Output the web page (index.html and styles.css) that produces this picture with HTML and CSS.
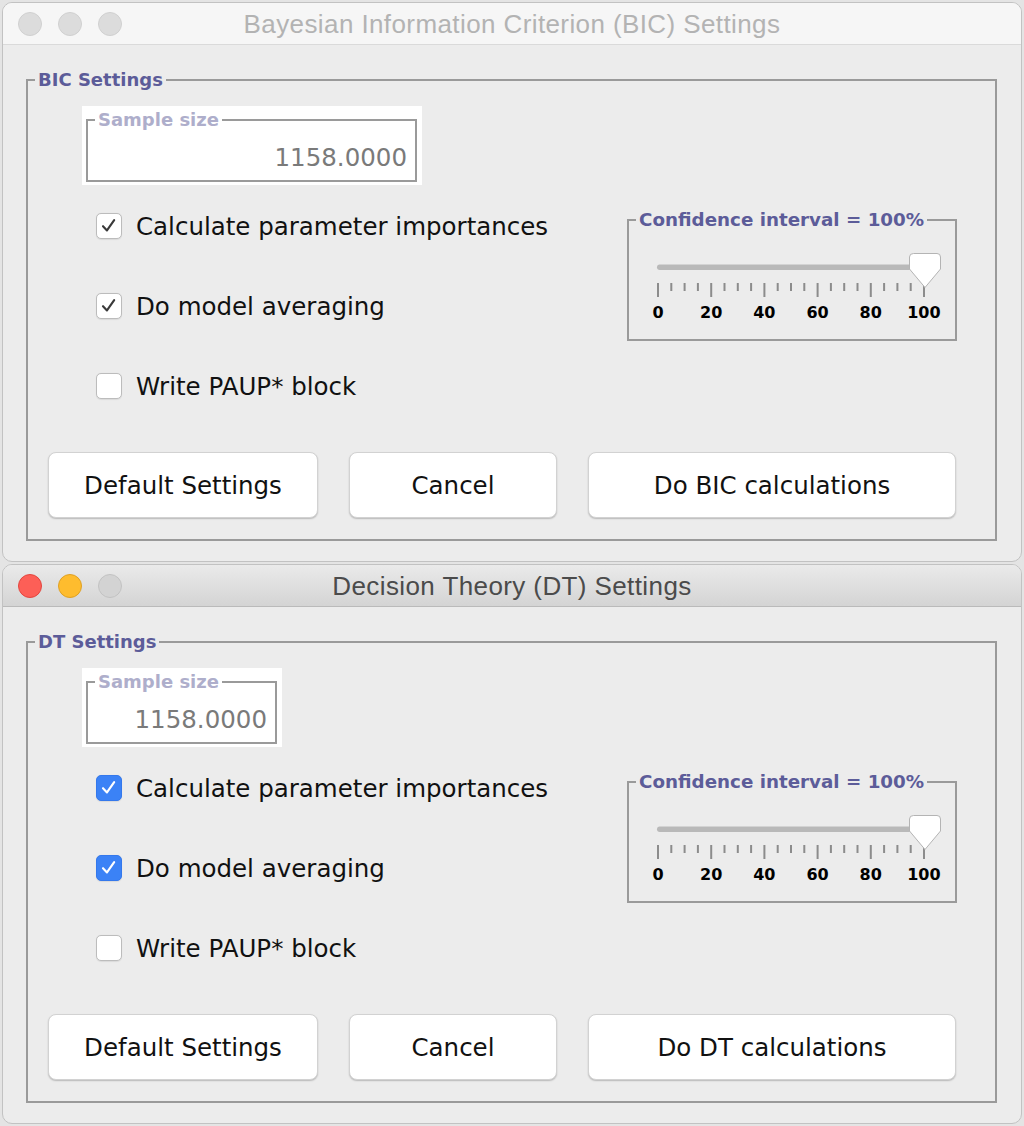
FILE: index.html
```html
<!DOCTYPE html>
<html>
<head>
  <meta charset="UTF-8">
  <title>BIC / DT Settings</title>
  <link rel="stylesheet" href="styles.css">
</head>
<body>
  <div class="screen">

    <div class="window inactive">
      <div class="titlebar">
        <div class="lights">
          <span class="light close"></span>
          <span class="light minimize"></span>
          <span class="light zoom"></span>
        </div>
        <div class="title">Bayesian Information Criterion (BIC) Settings</div>
        <div></div>
      </div>
      <div class="window-body">
        <fieldset class="group">
          <legend>BIC Settings</legend>
          <div class="group-main">
            <div class="left-col">
              <div class="sample-box wide">
                <fieldset class="sample-field">
                  <legend>Sample size</legend>
                  <div class="sample-value">1158.0000</div>
                </fieldset>
              </div>
              <div class="check-row">
                <span class="check on"><svg viewBox="0 0 26 26"><path d="M6.5 13.2 L10.8 17.8 L18.6 6.6"/></svg></span>
                <span class="check-label">Calculate parameter importances</span>
              </div>
              <div class="check-row">
                <span class="check on"><svg viewBox="0 0 26 26"><path d="M6.5 13.2 L10.8 17.8 L18.6 6.6"/></svg></span>
                <span class="check-label">Do model averaging</span>
              </div>
              <div class="check-row">
                <span class="check"></span>
                <span class="check-label">Write PAUP* block</span>
              </div>
            </div>
            <fieldset class="conf">
              <legend>Confidence interval = 100%</legend>
              <svg class="slider" width="326" height="50" viewBox="0 0 326 50">
                <rect class="track" x="28" y="13.5" width="270" height="5.5" rx="2.75"/>
                <g class="ticks">
                  <line x1="29" y1="32" x2="29" y2="46"/><line x1="82.2" y1="32" x2="82.2" y2="46"/>
                  <line x1="135.4" y1="32" x2="135.4" y2="46"/><line x1="188.6" y1="32" x2="188.6" y2="46"/>
                  <line x1="241.8" y1="32" x2="241.8" y2="46"/><line x1="295" y1="32" x2="295" y2="46"/>
                  <line x1="42.3" y1="32" x2="42.3" y2="40"/><line x1="55.6" y1="32" x2="55.6" y2="40"/>
                  <line x1="68.9" y1="32" x2="68.9" y2="40"/><line x1="95.5" y1="32" x2="95.5" y2="40"/>
                  <line x1="108.8" y1="32" x2="108.8" y2="40"/><line x1="122.1" y1="32" x2="122.1" y2="40"/>
                  <line x1="148.7" y1="32" x2="148.7" y2="40"/><line x1="162" y1="32" x2="162" y2="40"/>
                  <line x1="175.3" y1="32" x2="175.3" y2="40"/><line x1="201.9" y1="32" x2="201.9" y2="40"/>
                  <line x1="215.2" y1="32" x2="215.2" y2="40"/><line x1="228.5" y1="32" x2="228.5" y2="40"/>
                  <line x1="255.1" y1="32" x2="255.1" y2="40"/><line x1="268.4" y1="32" x2="268.4" y2="40"/>
                  <line x1="281.7" y1="32" x2="281.7" y2="40"/>
                </g>
                <path class="thumb" d="M284.5 2.5 H308 Q311.5 2.5 311.5 6 V18 L296 36.5 L280.5 18 V6 Q280.5 2.5 284.5 2.5 Z"/>
              </svg>
              <div class="scale">
                <span>0</span><span>20</span><span>40</span><span>60</span><span>80</span><span>100</span>
              </div>
            </fieldset>
          </div>
          <div class="buttons">
            <button class="btn btn-default">Default Settings</button>
            <button class="btn btn-cancel">Cancel</button>
            <button class="btn btn-run">Do BIC calculations</button>
          </div>
        </fieldset>
      </div>
    </div>

    <div class="window active">
      <div class="titlebar">
        <div class="lights">
          <span class="light close"></span>
          <span class="light minimize"></span>
          <span class="light zoom"></span>
        </div>
        <div class="title">Decision Theory (DT) Settings</div>
        <div></div>
      </div>
      <div class="window-body">
        <fieldset class="group">
          <legend>DT Settings</legend>
          <div class="group-main">
            <div class="left-col">
              <div class="sample-box narrow">
                <fieldset class="sample-field">
                  <legend>Sample size</legend>
                  <div class="sample-value">1158.0000</div>
                </fieldset>
              </div>
              <div class="check-row">
                <span class="check on"><svg viewBox="0 0 26 26"><path d="M6.5 13.2 L10.8 17.8 L18.6 6.6"/></svg></span>
                <span class="check-label">Calculate parameter importances</span>
              </div>
              <div class="check-row">
                <span class="check on"><svg viewBox="0 0 26 26"><path d="M6.5 13.2 L10.8 17.8 L18.6 6.6"/></svg></span>
                <span class="check-label">Do model averaging</span>
              </div>
              <div class="check-row">
                <span class="check"></span>
                <span class="check-label">Write PAUP* block</span>
              </div>
            </div>
            <fieldset class="conf">
              <legend>Confidence interval = 100%</legend>
              <svg class="slider" width="326" height="50" viewBox="0 0 326 50">
                <rect class="track" x="28" y="13.5" width="270" height="5.5" rx="2.75"/>
                <g class="ticks">
                  <line x1="29" y1="32" x2="29" y2="46"/><line x1="82.2" y1="32" x2="82.2" y2="46"/>
                  <line x1="135.4" y1="32" x2="135.4" y2="46"/><line x1="188.6" y1="32" x2="188.6" y2="46"/>
                  <line x1="241.8" y1="32" x2="241.8" y2="46"/><line x1="295" y1="32" x2="295" y2="46"/>
                  <line x1="42.3" y1="32" x2="42.3" y2="40"/><line x1="55.6" y1="32" x2="55.6" y2="40"/>
                  <line x1="68.9" y1="32" x2="68.9" y2="40"/><line x1="95.5" y1="32" x2="95.5" y2="40"/>
                  <line x1="108.8" y1="32" x2="108.8" y2="40"/><line x1="122.1" y1="32" x2="122.1" y2="40"/>
                  <line x1="148.7" y1="32" x2="148.7" y2="40"/><line x1="162" y1="32" x2="162" y2="40"/>
                  <line x1="175.3" y1="32" x2="175.3" y2="40"/><line x1="201.9" y1="32" x2="201.9" y2="40"/>
                  <line x1="215.2" y1="32" x2="215.2" y2="40"/><line x1="228.5" y1="32" x2="228.5" y2="40"/>
                  <line x1="255.1" y1="32" x2="255.1" y2="40"/><line x1="268.4" y1="32" x2="268.4" y2="40"/>
                  <line x1="281.7" y1="32" x2="281.7" y2="40"/>
                </g>
                <path class="thumb" d="M284.5 2.5 H308 Q311.5 2.5 311.5 6 V18 L296 36.5 L280.5 18 V6 Q280.5 2.5 284.5 2.5 Z"/>
              </svg>
              <div class="scale">
                <span>0</span><span>20</span><span>40</span><span>60</span><span>80</span><span>100</span>
              </div>
            </fieldset>
          </div>
          <div class="buttons">
            <button class="btn btn-default">Default Settings</button>
            <button class="btn btn-cancel">Cancel</button>
            <button class="btn btn-run">Do DT calculations</button>
          </div>
        </fieldset>
      </div>
    </div>

  </div>
</body>
</html>
```

FILE: styles.css
```css
* {
  box-sizing: border-box;
}

body {
  margin: 0;
  background: #e4e4e4;
  font-family: 'DejaVu Sans', 'Liberation Sans', sans-serif;
}

.screen {
  display: flex;
  flex-direction: column;
  gap: 2px;
  padding: 2px 2px 0 2px;
}

/* window frame */

.window {
  height: 560px;
  background: #ececec;
  border: 1px solid #c2c2c2;
  border-radius: 10px;
  overflow: hidden;
}

.titlebar {
  height: 42px;
  display: grid;
  grid-template-columns: 1fr auto 1fr;
  align-items: center;
  border-bottom: 1px solid #dadada;
  background: #f6f6f6;
}

.active .titlebar {
  background: linear-gradient(#eaeaea, #d4d4d4);
  border-bottom-color: #bababa;
}

.lights {
  display: flex;
  gap: 16px;
  padding-left: 15px;
}

.light {
  width: 24px;
  height: 24px;
  border-radius: 50%;
  background: #dcdcdc;
  border: 1px solid #d0d0d0;
}

.active .light.close {
  background: #fd5f57;
  border-color: #e2463f;
}

.active .light.minimize {
  background: #febc2e;
  border-color: #dea024;
}

.active .light.zoom {
  background: #d3d3d3;
  border-color: #c2c2c2;
}

.title {
  font-family: 'Liberation Sans', Arial, sans-serif;
  font-size: 26px;
  letter-spacing: 0.4px;
  color: #b3b3b3;
  padding-top: 1px;
}

.active .title {
  color: #4b4b4b;
}

.window-body {
  padding: 26px 24px 0 23px;
}

/* titled borders */

fieldset {
  margin: 0;
  padding: 0;
  min-width: 0;
  border: 2px solid #9a9a9a;
}

legend {
  font-weight: bold;
  font-size: 18px;
  line-height: 18px;
  color: #5c5c99;
  padding: 0 3px;
  margin-left: 7px;
}

.group {
  padding-bottom: 21px;
}

.group-main {
  display: flex;
}

.left-col {
  flex: 1;
  padding-left: 54px;
  padding-top: 17px;
}

/* sample size field */

.sample-box {
  background: #fff;
  padding: 5px 5px 3px 4px;
}

.sample-box.wide {
  width: 340px;
}

.sample-box.narrow {
  width: 200px;
}

.sample-field legend {
  color: #aeaecb;
}

.sample-value {
  text-align: right;
  font-size: 24.5px;
  line-height: 28px;
  color: #7a7a7a;
  padding: 15px 8px 8px 0;
}

/* checkboxes */

.check-row {
  display: flex;
  align-items: center;
  height: 40px;
  margin-top: 40px;
  padding-left: 14px;
}

.check-row:nth-of-type(2) {
  margin-top: 21px;
}

.check {
  width: 26px;
  height: 26px;
  border-radius: 5px;
  background: #fff;
  border: 1px solid #bcbcbc;
  box-shadow: 0 0.5px 1px rgba(0,0,0,0.08);
}

.check svg {
  display: block;
  width: 24px;
  height: 24px;
  fill: none;
  stroke: #3a3a3a;
  stroke-width: 2.3;
  stroke-linecap: round;
  stroke-linejoin: round;
}

.active .check.on {
  background: #3b82f6;
  border-color: #3478ec;
}

.active .check.on svg {
  stroke: #fff;
}

.check-label {
  margin-left: 14px;
  font-size: 24.5px;
  color: #111;
}

/* confidence slider */

.conf {
  width: 330px;
  margin-top: 122px;
  margin-right: 38px;
  align-self: flex-start;
  padding-bottom: 16px;
}

.conf legend {
  font-size: 18.3px;
}

.slider {
  display: block;
  margin-top: 22px;
}

.track {
  fill: #b9b9b9;
}

.ticks line {
  stroke: #8c8c8c;
  stroke-width: 2;
}

.thumb {
  fill: #fff;
  stroke: #b4b4b4;
  stroke-width: 1;
}

.scale {
  display: grid;
  grid-template-columns: repeat(6, 53.2px);
  margin-left: 2.4px;
  margin-top: 1.5px;
  font-weight: bold;
  font-size: 16px;
  line-height: 20px;
  color: #000;
  text-align: center;
}

/* buttons */

.buttons {
  display: flex;
  gap: 31px;
  margin-top: 46px;
  padding-left: 20px;
}

.btn {
  height: 66px;
  background: #fff;
  border: 1px solid #d2d2d2;
  border-radius: 8px;
  box-shadow: 0 1px 1.5px rgba(0,0,0,0.22);
  font-family: 'DejaVu Sans', sans-serif;
  font-size: 24.5px;
  color: #111;
  padding: 0;
}

.btn-default {
  width: 270px;
}

.btn-cancel {
  width: 208px;
}

.btn-run {
  width: 368px;
}
```
